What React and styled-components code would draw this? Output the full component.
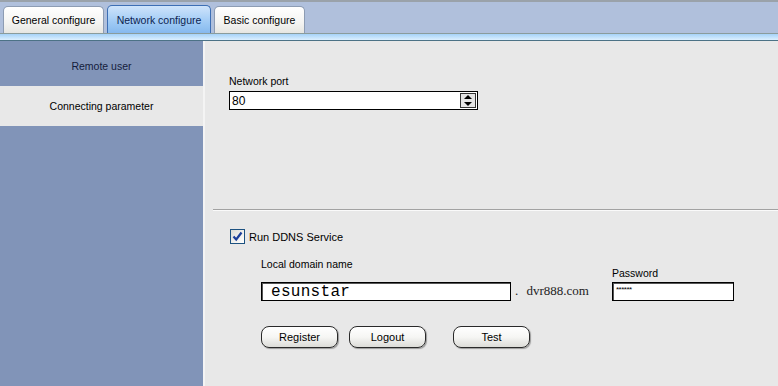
import styled, { createGlobalStyle } from "styled-components";

const GlobalStyle = createGlobalStyle`
  html, body {
    margin: 0;
    padding: 0;
  }
  body {
    font-family: "Liberation Sans", Arial, sans-serif;
    font-size: 10.5px;
    color: #000;
    background: #e8e8e8;
  }
`;

const Window = styled.div`
  width: 778px;
  height: 386px;
  overflow: hidden;
  display: flex;
  flex-direction: column;
  background: #e8e8e8;
`;

const TabStrip = styled.div`
  height: 31px;
  border-top: 2px solid #9aa2aa;
  background: #b0c0dc;
  display: flex;
  align-items: flex-end;
  padding-left: 3px;
  gap: 3px;
`;

const Tab = styled.div`
  width: ${(p) => p.$w}px;
  height: ${(p) => (p.$active ? "28px" : "27px")};
  display: flex;
  align-items: center;
  justify-content: center;
  box-sizing: border-box;
  border: 1px solid ${(p) => (p.$active ? "#3d6fb5" : "#8d9cb3")};
  border-bottom: none;
  border-radius: 5px 5px 0 0;
  color: ${(p) => (p.$active ? "#0c1e50" : "#000")};
  background: ${(p) =>
    p.$active
      ? "linear-gradient(#cfe4fb, #9fcaf5 60%, #86b9ee)"
      : "linear-gradient(#ffffff, #f4f4f2 60%, #e6e6e2)"};
  white-space: nowrap;
`;

const TabBand = styled.div`
  height: 6px;
  border-top: 1px solid #8a9c9c;
  border-bottom: 1px solid #4c7286;
  background: linear-gradient(#a6d2f8, #c6e4fc 60%, #dcefff);
`;

const Body = styled.div`
  flex: 1;
  display: flex;
  min-height: 0;
`;

const Sidebar = styled.div`
  width: 203px;
  padding-top: 5px;
  background: #8194b8;
  border-right: 2px solid #f4f4f4;
  display: flex;
  flex-direction: column;
`;

const SideItem = styled.div`
  height: 40px;
  display: flex;
  align-items: center;
  justify-content: center;
  background: ${(p) => (p.$active ? "#e8e8e8" : "#8194b8")};
  color: ${(p) => (p.$active ? "#000" : "#141c3c")};
`;

const Content = styled.div`
  flex: 1;
  display: flex;
  flex-direction: column;
  background: #e8e8e8;
`;

const PortSection = styled.div`
  height: 168px;
  padding: 34px 0 0 24px;
  box-sizing: border-box;
`;

const Label = styled.div`
  line-height: 13px;
  margin-bottom: ${(p) => p.$mb || 3}px;
`;

const SpinBox = styled.div`
  width: 249px;
  height: 19px;
  box-sizing: border-box;
  border: 1px solid #000;
  background: #fff;
  display: flex;
  align-items: center;
  justify-content: space-between;
  padding: 0 1px 0 2px;
  font-size: 12px;
`;

const Spinner = styled.div`
  width: 16px;
  height: 15px;
  box-sizing: border-box;
  border: 1px solid #333;
  background: #e4e4e4;
  display: flex;
  flex-direction: column;
  align-items: center;
  justify-content: space-around;
`;

const Separator = styled.div`
  margin-left: 8px;
  height: 0;
  border-top: 1px solid #a2a2a2;
  border-bottom: 1px solid #fafafa;
`;

const DdnsSection = styled.div`
  padding: 18px 0 0 25px;
  display: flex;
  flex-direction: column;
`;

const CheckRow = styled.label`
  display: flex;
  align-items: center;
  gap: 4px;
  font-size: 11px;
`;

const CheckBox = styled.span`
  width: 13px;
  height: 13px;
  border: 1px solid #1c5180;
  background: linear-gradient(135deg, #dcdcd6, #ffffff);
  display: flex;
  align-items: center;
  justify-content: center;
`;

const FieldRow = styled.div`
  margin: 14px 0 0 31px;
  display: flex;
  align-items: flex-end;
`;

const Field = styled.div`
  display: flex;
  flex-direction: column;
`;

const TextBox = styled.div`
  width: ${(p) => p.$w}px;
  height: 19px;
  box-sizing: border-box;
  border: 1px solid #000;
  box-shadow: inset 1px 1px 0 #555;
  background: #fff;
  display: flex;
  align-items: center;
  padding-left: ${(p) => p.$pl || 3}px;
`;

const DomainText = styled.span`
  font-family: "Liberation Mono", "DejaVu Sans Mono", monospace;
  font-size: 16px;
  letter-spacing: 0.3px;
`;

const Suffix = styled.span`
  font-family: "Liberation Serif", "DejaVu Serif", serif;
  font-size: 13px;
  margin: 0 23px 1px 4px;
  color: #222;
  height: 18px;
  line-height: 18px;
  word-spacing: 5px;
`;

const Masked = styled.span`
  font-size: 8px;
  letter-spacing: -0.5px;
  position: relative;
  top: -2px;
`;

const ButtonRow = styled.div`
  margin: 25px 0 0 31px;
  display: flex;
`;

const Button = styled.button`
  width: 77px;
  height: 22px;
  margin-right: ${(p) => p.$mr || 0}px;
  border: 1px solid #2a2a2a;
  border-radius: 8px;
  background: linear-gradient(#ffffff, #f6f6f4 50%, #dcdcd8);
  box-shadow: 1px 1px 1px #9a9a9a;
  font-family: "Liberation Sans", Arial, sans-serif;
  font-size: 11px;
  color: #000;
  padding: 0;
`;

function Arrow({ up }) {
  return (
    <svg width="8" height="4" viewBox="0 0 8 4">
      <path d={up ? "M0 4 L4 0 L8 4 Z" : "M0 0 L8 0 L4 4 Z"} fill="#000" />
    </svg>
  );
}

export default function App() {
  return (
    <>
      <GlobalStyle />
      <Window>
        <TabStrip>
          <Tab $w={101}>General configure</Tab>
          <Tab $w={104} $active>Network configure</Tab>
          <Tab $w={91}>Basic configure</Tab>
        </TabStrip>
        <TabBand />
        <Body>
          <Sidebar>
            <SideItem>Remote user</SideItem>
            <SideItem $active>Connecting parameter</SideItem>
          </Sidebar>
          <Content>
            <PortSection>
              <Label>Network port</Label>
              <SpinBox>
                <span>80</span>
                <Spinner>
                  <Arrow up />
                  <Arrow />
                </Spinner>
              </SpinBox>
            </PortSection>
            <Separator />
            <DdnsSection>
              <CheckRow>
                <CheckBox>
                  <svg width="11" height="11" viewBox="0 0 11 11">
                    <path d="M1.5 5.5 L4.2 8.5 L9.5 1.5" fill="none" stroke="#1c3f9a" strokeWidth="2.2" />
                  </svg>
                </CheckBox>
                Run DDNS Service
              </CheckRow>
              <FieldRow>
                <Field>
                  <Label $mb={11}>Local domain name</Label>
                  <TextBox $w={250} $pl={9}>
                    <DomainText>esunstar</DomainText>
                  </TextBox>
                </Field>
                <Suffix>. dvr888.com</Suffix>
                <Field>
                  <Label $mb={2}>Password</Label>
                  <TextBox $w={122}>
                    <Masked>******</Masked>
                  </TextBox>
                </Field>
              </FieldRow>
              <ButtonRow>
                <Button $mr={11}>Register</Button>
                <Button $mr={27}>Logout</Button>
                <Button>Test</Button>
              </ButtonRow>
            </DdnsSection>
          </Content>
        </Body>
      </Window>
    </>
  );
}
